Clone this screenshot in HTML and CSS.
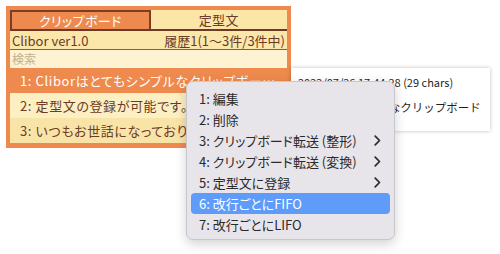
FILE: index.html
```html
<!DOCTYPE html>
<html lang="ja">
  <head>
    <meta charset="UTF-8" />
    <meta name="viewport" content="width=device-width, initial-scale=1.0" />
    <title>Clibor</title>
    <link rel="stylesheet" href="styles.css">
  </head>

  <body>
    <div class="clibor">
      <div class="tabs">
        <div class="tab tab-active">クリップボード</div>
        <div class="tab">定型文</div>
      </div>
      <div class="status">
        <span>Clibor ver1.0</span>
        <span>履歴1(1～3件/3件中)</span>
      </div>
      <div class="search">検索</div>
      <div class="item item-selected">1: Cliborはとてもシンプルなクリップボード履歴ツールです</div>
      <div class="item item-even">2: 定型文の登録が可能です。</div>
      <div class="item item-odd">3: いつもお世話になっております。</div>
    </div>

    <div class="preview">
      <p class="preview-date">2022/07/26 17:44:28 (29 chars)</p>
      <p class="preview-text">はとてもシンプルなクリップボード</p>
    </div>

    <div class="menu">
      <div class="menu-item">1: 編集</div>
      <div class="menu-item">2: 削除</div>
      <div class="menu-item">3: クリップボード転送 (整形)
        <svg class="chevron" width="7" height="11" viewBox="0 0 7 11"><path d="M1.2 1.2 L5.5 5.5 L1.2 9.8" /></svg>
      </div>
      <div class="menu-item">4: クリップボード転送 (変換)
        <svg class="chevron" width="7" height="11" viewBox="0 0 7 11"><path d="M1.2 1.2 L5.5 5.5 L1.2 9.8" /></svg>
      </div>
      <div class="menu-item">5: 定型文に登録
        <svg class="chevron" width="7" height="11" viewBox="0 0 7 11"><path d="M1.2 1.2 L5.5 5.5 L1.2 9.8" /></svg>
      </div>
      <div class="menu-item menu-item-active">6: 改行ごとにFIFO</div>
      <div class="menu-item">7: 改行ごとにLIFO</div>
    </div>
  </body>
</html>
```

FILE: styles.css
```css
body {
  margin: 0;
  background-color: #ffffff;
  font-family: "Noto Sans CJK JP", "Noto Sans", sans-serif;
  font-feature-settings: "palt";
  position: relative;
  height: 254px;
  overflow: hidden;
}

.clibor {
  margin: 6px 0 0 6px;
  width: 277px;
  border: 4px solid #ef8a4e;
  border-bottom-width: 5px;
  background-color: #ef8a4e;
  color: #6b3b27;
}

.tabs {
  display: flex;
  height: 19px;
  border-bottom: 2px solid #6b3b27;
}

.tab {
  flex: 1;
  display: flex;
  align-items: center;
  justify-content: center;
  font-size: 13px;
  letter-spacing: 0.4px;
  background-color: #fbe6a8;
}

.tab-active {
  background-color: #ef8a4e;
  color: #ffffff;
  border: 2px solid #7a3e26;
  border-bottom: none;
}

.status {
  display: flex;
  justify-content: space-between;
  align-items: center;
  height: 18px;
  padding: 0 2px;
  font-size: 13px;
  background-color: #fbe7aa;
  border-bottom: 1px solid #8c5a3c;
}

.search {
  height: 18px;
  line-height: 18px;
  padding: 0 2px;
  font-size: 12px;
  color: #c2b08f;
  background-color: #fdf3d3;
}

.item {
  height: 25px;
  line-height: 25px;
  padding: 0 10px;
  font-size: 13px;
  letter-spacing: 0.6px;
  white-space: nowrap;
  overflow: hidden;
  text-overflow: ellipsis;
}

.item-selected {
  color: #ffffff;
  background-color: #ef8a4e;
}

.item-even {
  background-color: #fcefc2;
}

.item-odd {
  background-color: #f9e4a8;
}

.preview {
  position: absolute;
  left: 291px;
  top: 68px;
  width: 199px;
  height: 63px;
  background-color: #ffffff;
  box-shadow: 0 0 4px rgb(0 0 0 / 25%);
  color: #1f1f1f;
  padding: 0 7px;
  box-sizing: border-box;
  overflow: hidden;
  font-feature-settings: normal;
}

.preview p {
  margin: 0;
  white-space: nowrap;
}

.preview-date {
  margin-top: 6px !important;
  font-size: 11px;
}

.preview-text {
  margin-top: 9px !important;
  font-size: 11.5px;
}

.menu {
  position: absolute;
  left: 186px;
  top: 81px;
  width: 209px;
  box-sizing: border-box;
  padding: 6px 4px 4px;
  background-color: #e8e5ea;
  border: 1px solid #c9c6cc;
  border-radius: 7px;
  box-shadow: 0 4px 12px rgb(0 0 0 / 18%);
}

.menu-item {
  display: flex;
  align-items: center;
  justify-content: space-between;
  height: 21px;
  padding: 0 9px 0 8px;
  font-size: 13px;
  color: #2a2a2a;
  border-radius: 4px;
}

.menu-item-active {
  background-color: #5f9cf9;
  color: #ffffff;
}

.chevron path {
  fill: none;
  stroke: #2a2a2a;
  stroke-width: 1.7;
  stroke-linecap: round;
  stroke-linejoin: round;
}
```
